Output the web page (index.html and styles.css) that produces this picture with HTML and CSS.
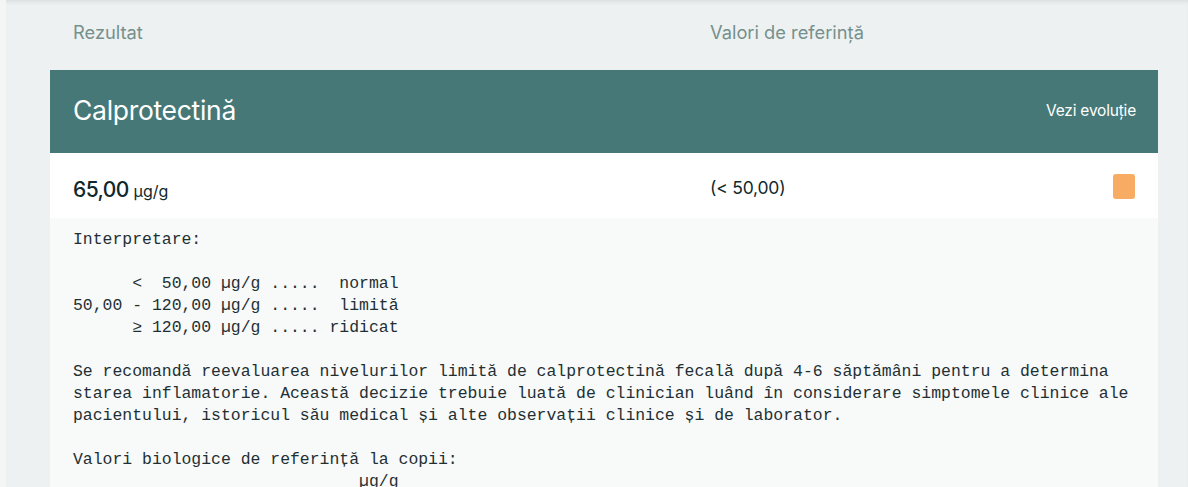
FILE: index.html
```html
<!DOCTYPE html>
<html lang="ro">
<head>
<meta charset="utf-8">
<title>Calprotectină</title>
<link rel="stylesheet" href="styles.css">
</head>
<body>
<div class="shell">
  <div class="rail"></div>
  <main class="content">
    <div class="cols">
      <div class="col-result">Rezultat</div>
      <div class="col-ref">Valori de referință</div>
    </div>
    <section class="card">
      <header class="card-head">
        <h2 class="title">Calprotectină</h2>
        <a class="evo" href="#">Vezi evoluție</a>
      </header>
      <div class="row">
        <div class="value">65,00 <span class="unit">µg/g</span></div>
        <div class="ref">(&lt; 50,00)</div>
        <div class="flag"></div>
      </div>
      <pre class="note">Interpretare:

      &lt;  50,00 µg/g .....  normal
50,00 - 120,00 µg/g .....  limită
      ≥ 120,00 µg/g ..... ridicat

Se recomandă reevaluarea nivelurilor limită de calprotectină fecală după 4-6 săptămâni pentru a determina
starea inflamatorie. Această decizie trebuie luată de clinician luând în considerare simptomele clinice ale
pacientului, istoricul său medical și alte observații clinice și de laborator.

Valori biologice de referință la copii:
                             µg/g</pre>
    </section>
  </main>
</div>
</body>
</html>
```

FILE: styles.css
```css
html, body {
  margin: 0;
  padding: 0;
  height: 100%;
  overflow: hidden;
}
body {
  background: #edf1f2;
  font-family: Inter, "Noto Sans", sans-serif;
}
.shell {
  display: flex;
  height: 487px;
  box-shadow: inset 0 4px 5px -3px rgba(0, 0, 0, 0.10);
}
.rail {
  width: 6px;
  flex: none;
  background: #f4f6f6;
}
.content {
  flex: 1;
  padding: 0 30px 0 44px;
}
.cols {
  display: flex;
  height: 70px;
  align-items: center;
  padding: 0 0 6px 23px;
  box-sizing: border-box;
  color: #76908c;
  font-size: 18.3px;
}
.col-result {
  width: 637px;
}
.card {
  width: 1108px;
}
.card-head {
  background: #457877;
  height: 83px;
  display: flex;
  align-items: center;
  justify-content: space-between;
  padding: 0 22px 0 23px;
  box-sizing: border-box;
}
.title {
  margin: 0;
  color: #fff;
  font-weight: 400;
  font-size: 26.5px;
  letter-spacing: -0.3px;
  padding-bottom: 3px;
}
.evo {
  color: #fff;
  text-decoration: none;
  font-size: 15.5px;
  letter-spacing: -0.2px;
  padding-bottom: 3px;
}
.row {
  background: #fff;
  height: 65px;
  display: flex;
  align-items: center;
  padding: 0 23px;
  box-sizing: border-box;
}
.value {
  width: 637px;
  color: #10282c;
  font-size: 21px;
  font-weight: 500;
  letter-spacing: -0.6px;
  padding-top: 7px;
}
.unit {
  font-size: 16px;
  font-weight: 400;
  letter-spacing: 0;
}
.ref {
  flex: 1;
  color: #10282c;
  font-size: 17.5px;
  letter-spacing: -0.2px;
  padding-top: 4px;
}
.flag {
  width: 22px;
  height: 25px;
  border-radius: 3px;
  background: #f8ab62;
  margin-top: 2px;
}
.note {
  margin: 0;
  background: #f8f9f9;
  padding: 11px 23px 20px;
  font-family: "Liberation Mono", "DejaVu Sans Mono", monospace;
  font-size: 16.45px;
  line-height: 22px;
  color: #1e3034;
}
```
